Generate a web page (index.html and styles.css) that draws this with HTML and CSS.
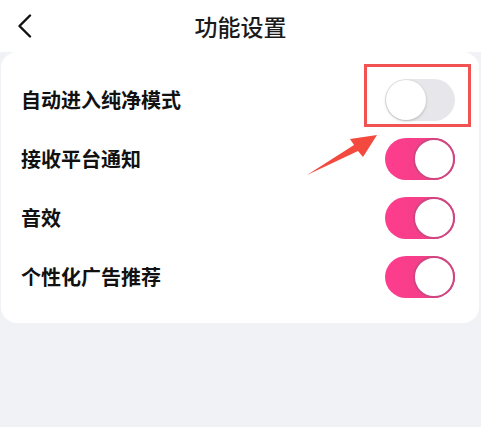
FILE: index.html
```html
<!DOCTYPE html>
<html lang="zh-CN">
<head>
<meta charset="utf-8">
<title>功能设置</title>
<link rel="stylesheet" href="styles.css">
</head>
<body>
<header class="topbar">
  <svg class="back" width="16" height="24" viewBox="0 0 16 24" aria-hidden="true">
    <polyline points="13,1.5 2.5,12 13,22.5" fill="none" stroke="#111" stroke-width="2.4" stroke-linecap="round" stroke-linejoin="round"/>
  </svg>
  <h1 class="title">功能设置</h1>
</header>
<main class="card">
  <div class="row">
    <span class="label">自动进入纯净模式</span>
    <span class="switch"><span class="knob"></span></span>
  </div>
  <div class="row">
    <span class="label">接收平台通知</span>
    <span class="switch on"><span class="knob"></span></span>
  </div>
  <div class="row">
    <span class="label">音效</span>
    <span class="switch on"><span class="knob"></span></span>
  </div>
  <div class="row">
    <span class="label">个性化广告推荐</span>
    <span class="switch on"><span class="knob"></span></span>
  </div>
</main>
<svg class="annotation" width="481" height="427" viewBox="0 0 481 427" aria-hidden="true">
  <rect x="365.5" y="65.5" width="104" height="60" fill="none" stroke="#f15252" stroke-width="3"/>
  <polygon points="307,175 354,145 350,139 377,135 363,157 358,151" fill="#f4493f"/>
</svg>
</body>
</html>
```

FILE: styles.css
```css
html, body {
  margin: 0;
  padding: 0;
}
body {
  width: 481px;
  height: 427px;
  background: #f1f2f6;
  font-family: "Noto Sans CJK SC", "Noto Sans", sans-serif;
  color: #111;
  position: relative;
  overflow: hidden;
}
.topbar {
  height: 52px;
  background: #fff;
  display: flex;
  align-items: center;
  justify-content: center;
  position: relative;
}
.back {
  position: absolute;
  left: 17px;
  top: 14px;
}
.title {
  margin: 0;
  font-size: 23px;
  font-weight: 500;
  line-height: 1;
  color: #1a1a1a;
}
.card {
  margin: 0 2px 0 1px;
  background: #fff;
  border-radius: 16px;
  padding: 18px 24px 17px 20px;
  display: flex;
  flex-direction: column;
}
.row {
  height: 59px;
  display: flex;
  align-items: center;
  justify-content: space-between;
}
.label {
  font-size: 20px;
  font-weight: 700;
  color: #111;
}
.switch {
  width: 70px;
  height: 42px;
  border-radius: 21px;
  background: #e7e7eb;
  position: relative;
  box-sizing: border-box;
  display: flex;
  align-items: center;
  padding: 1px;
}
.knob {
  width: 40px;
  height: 40px;
  border-radius: 50%;
  background: #fff;
  box-shadow: 0 1px 3px rgba(0, 0, 0, 0.22);
  box-sizing: border-box;
}
.switch.on {
  background: linear-gradient(90deg, #ff3c8d 0%, #f43f89 55%, #d9447f 100%);
  justify-content: flex-end;
  padding: 0;
}
.switch.on .knob {
  width: 42px;
  height: 42px;
  border: 2px solid #cf4681;
  box-shadow: none;
}
.annotation {
  position: absolute;
  left: 0;
  top: 0;
  pointer-events: none;
}
```
